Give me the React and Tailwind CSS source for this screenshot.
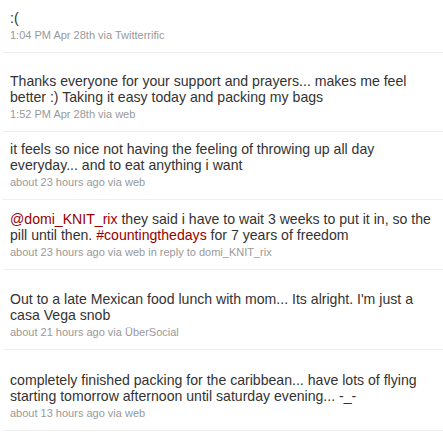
import React from 'react';

const posts = [
  {
    id: 1,
    pad: 'pt-[10px]',
    body: [':('],
    meta: '1:04 PM Apr 28th via Twitterrific',
  },
  {
    id: 2,
    pad: 'pt-[20px]',
    body: ['Thanks everyone for your support and prayers... makes me feel better :) Taking it easy today and packing my bags'],
    meta: '1:52 PM Apr 28th via web',
  },
  {
    id: 3,
    pad: 'pt-[9px]',
    body: ['it feels so nice not having the feeling of throwing up all day everyday... and to eat anything i want'],
    meta: 'about 23 hours ago via web',
  },
  {
    id: 4,
    pad: 'pt-[11px]',
    body: [
      { link: '@domi_KNIT_rix' },
      ' they said i have to wait 3 weeks to put it in, so the pill until then. ',
      { link: '#countingthedays' },
      ' for 7 years of freedom',
    ],
    meta: 'about 23 hours ago via web in reply to domi_KNIT_rix',
  },
  {
    id: 5,
    pad: 'pt-[21px]',
    body: ["Out to a late Mexican food lunch with mom... Its alright. I'm just a casa Vega snob"],
    meta: 'about 21 hours ago via ÜberSocial',
  },
  {
    id: 6,
    pad: 'pt-[22px]',
    body: ['completely finished packing for the caribbean... have lots of flying starting tomorrow afternoon until saturday evening... -_-'],
    meta: 'about 13 hours ago via web',
  },
];

const App = () => {
  return (
    <div className="w-[443px] h-[434px] bg-white overflow-hidden font-['Liberation_Sans',Arial,sans-serif]">
      <div className="pl-[3px]">
        {posts.map((p) => (
          <div
            key={p.id}
            className={`${p.pad} pb-[10px] pl-[7px] pr-[1px] border-b border-[#eeeeee]`}
          >
            <p className="text-[14.1px] leading-[16px] text-[#333333]">
              {p.body.map((part, i) =>
                typeof part === 'string' ? (
                  <span key={i}>{part}</span>
                ) : (
                  <span key={i} className="text-[#990000]">{part.link}</span>
                )
              )}
            </p>
            <p className="mt-[2px] text-[11px] leading-[14px] text-[#999999]">
              {p.meta}
            </p>
          </div>
        ))}
      </div>
    </div>
  );
};

export default App;
